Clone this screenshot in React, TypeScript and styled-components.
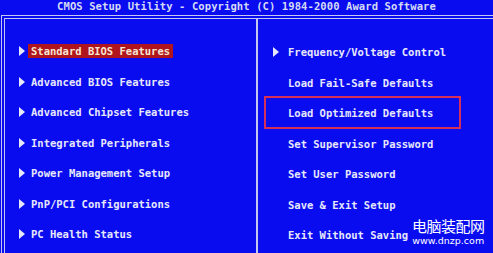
import React, { FC } from 'react'
import styled, { createGlobalStyle } from 'styled-components'

const BLUE = '#0a0cf0'
const LINE = '#c4c8f0'
const TEXT = '#e6e8fa'

const leftItems = [
  'Standard BIOS Features',
  'Advanced BIOS Features',
  'Advanced Chipset Features',
  'Integrated Peripherals',
  'Power Management Setup',
  'PnP/PCI Configurations',
  'PC Health Status',
]

const rightItems: { label: string; sub?: boolean }[] = [
  { label: 'Frequency/Voltage Control', sub: true },
  { label: 'Load Fail-Safe Defaults' },
  { label: 'Load Optimized Defaults' },
  { label: 'Set Supervisor Password' },
  { label: 'Set User Password' },
  { label: 'Save & Exit Setup' },
  { label: 'Exit Without Saving' },
]

const Arrow: FC = () => (
  <svg width='6' height='10' viewBox='0 0 6 10'>
    <path d='M0 0 L6 5 L0 10 Z' fill={TEXT} />
  </svg>
)

const App: FC = () => (
  <>
    <GlobalStyle />
    <Screen>
      <Title>CMOS Setup Utility - Copyright (C) 1984-2000 Award Software</Title>
      <Frame>
        <LeftColumn>
          {leftItems.map((label, i) => (
            <MenuRow key={label}>
              <ArrowSlot width={9}><Arrow /></ArrowSlot>
              <Label selected={i === 0}>{label}</Label>
            </MenuRow>
          ))}
        </LeftColumn>
        <RightColumn>
          {rightItems.map(item => (
            <MenuRow key={item.label}>
              <ArrowSlot width={12}>{item.sub && <Arrow />}</ArrowSlot>
              <Label>{item.label}</Label>
            </MenuRow>
          ))}
        </RightColumn>
      </Frame>
      <Marker />
      <Watermark>
        <WatermarkName>电脑装配网</WatermarkName>
        <WatermarkUrl>www.dnzp.com</WatermarkUrl>
      </Watermark>
    </Screen>
  </>
)

const GlobalStyle = createGlobalStyle`
  html, body {
    margin: 0;
    padding: 0;
    background: ${BLUE};
  }
`

const Screen = styled.div`
  position: relative;
  width: 493px;
  height: 253px;
  overflow: hidden;
  background: ${BLUE};
  font-family: 'DejaVu Sans Mono', 'Liberation Mono', monospace;
  font-weight: bold;
  font-size: 10.5px;
  color: ${TEXT};
`

const Title = styled.div`
  height: 15px;
  line-height: 13px;
  text-align: center;
  color: #d4daf4;
  white-space: pre;
  letter-spacing: 0.1px;
`

const Frame = styled.div`
  display: grid;
  grid-template-columns: 253px 1fr;
  margin-left: 1px;
  width: 520px;
  height: 260px;
  border-top: 4px double ${LINE};
  border-left: 4px double ${LINE};
`

const LeftColumn = styled.div`
  display: flex;
  flex-direction: column;
  padding: 17px 0 0 14px;
  border-right: 2px solid ${LINE};
`

const RightColumn = styled.div`
  display: flex;
  flex-direction: column;
  padding: 18px 0 0 15px;
`

const MenuRow = styled.div`
  display: flex;
  align-items: center;
  height: 30.5px;
`

const ArrowSlot = styled.span<{ width: number }>`
  display: flex;
  align-items: center;
  width: ${({ width }) => width}px;
  height: 10px;
`

const Label = styled.span<{ selected?: boolean }>`
  display: inline-block;
  height: 14px;
  line-height: 14px;
  padding: 0 3px;
  white-space: pre;
  background: ${({ selected }) => (selected ? '#b0141c' : 'transparent')};
  color: ${({ selected }) => (selected ? '#f6e6d4' : TEXT)};
`

const Marker = styled.div`
  position: absolute;
  left: 264px;
  top: 96px;
  width: 193px;
  height: 29px;
  border: 2px solid #d4305a;
`

const Watermark = styled.div`
  position: absolute;
  left: 412px;
  top: 217px;
  display: flex;
  flex-direction: column;
  align-items: center;
  color: #ffffff;
  font-weight: normal;
`

const WatermarkName = styled.div`
  font-family: 'Noto Sans CJK SC', sans-serif;
  font-size: 15px;
  line-height: 18px;
  letter-spacing: -0.5px;
`

const WatermarkUrl = styled.div`
  font-family: 'DejaVu Sans', sans-serif;
  font-size: 9.5px;
  line-height: 12px;
`

export default App
